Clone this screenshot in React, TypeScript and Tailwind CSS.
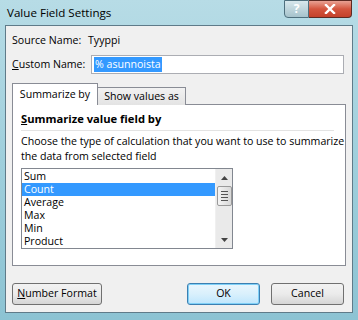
const font = { fontFamily: '"Open Sans", "Noto Sans", sans-serif' }

const items = ["Sum", "Count", "Average", "Max", "Min", "Product"]

const App = () => {
  return (
    <div
      className="w-[358px] h-[320px] overflow-hidden bg-gradient-to-b from-[#b7dce6] via-[#9fcfdc] to-[#8cc3d3] flex flex-col text-[10.6px] text-black whitespace-nowrap"
      style={font}
    >
      {/* title bar */}
      <div className="h-[25px] shrink-0 flex items-start relative">
        <div className="pl-[7px] pt-[4px] text-[11.6px] text-black">Value Field Settings</div>
        <div className="absolute right-[6px] top-0 flex">
          <div className="w-[25px] h-[18px] border border-[#4e6f7d] rounded-bl-[4px] bg-gradient-to-b from-[#d7e7ec] to-[#a6c3cc] flex items-center justify-center text-white text-[12px] font-bold">
            ?
          </div>
          <div className="w-[43px] h-[18px] border border-l-0 border-[#5d2a22] rounded-br-[4px] bg-gradient-to-b from-[#e8a193] via-[#d4553e] to-[#c4412a] flex items-center justify-center">
            <svg width="12" height="10" viewBox="0 0 12 10">
              <path d="M2 1 L10 9 M10 1 L2 9" stroke="#fff" strokeWidth="2.4" strokeLinecap="square" />
            </svg>
          </div>
        </div>
      </div>

      {/* client area */}
      <div className="mx-[5px] h-[288px] shrink-0 border border-[#5f7b89] bg-[#f0f0f0] px-[6px] pt-[7px]">
        <div className="flex items-center h-[16px]">
          <span className="w-[76px]">Source Name:</span>
          <span>Tyyppi</span>
        </div>
        <div className="flex items-center mt-[6px]">
          <span className="w-[79px]">
            <span className="underline">C</span>ustom Name:
          </span>
          <div className="w-[253px] h-[19px] border border-[#abadb3] bg-white flex items-center px-[2px]">
            <span className="bg-[#3399ff] text-white px-[1px] leading-[15px]">% asunnoista</span>
          </div>
        </div>

        {/* tabs */}
        <div className="mt-[9px] flex items-end h-[22px] relative z-10">
          <div className="w-[86px] h-[22px] border border-b-0 border-[#898c95] bg-white flex items-center justify-center">
            Summarize by
          </div>
          <div className="w-[88px] h-[18px] border border-l-0 border-b-0 border-[#898c95] bg-gradient-to-b from-[#f2f2f2] to-[#e3e3e3] flex items-center justify-center">
            Show values as
          </div>
        </div>
        <div className="-mt-[1px] w-[334px] h-[162px] border border-[#898c95] bg-white px-[8px] pt-[6px]">
          <div className="font-bold text-[11.2px] leading-[16px]">
            <span className="underline">S</span>ummarize value field by
          </div>
          <div className="h-px bg-[#e3e3e3] mt-[3px] mr-[3px]" />
          <div className="mt-[3px] leading-[15px]">
            Choose the type of calculation that you want to use to summarize
            <br />
            the data from selected field
          </div>
          <div className="mt-[4px] w-[212px] h-[81px] border border-[#828790] flex">
            <div className="flex-1 pt-[1px]">
              {items.map((it) => (
                <div
                  key={it}
                  className={
                    it === "Count"
                      ? "h-[13px] leading-[13px] pl-[2px] bg-[#3399ff] text-white"
                      : "h-[13px] leading-[13px] pl-[2px]"
                  }
                >
                  {it}
                </div>
              ))}
            </div>
            <div className="w-[17px] bg-[#eaeaea] flex flex-col items-center border-l border-[#f0f0f0]">
              <div className="h-[17px] flex items-center justify-center">
                <svg width="7" height="4" viewBox="0 0 7 4">
                  <path d="M0 4 L3.5 0 L7 4 Z" fill="#444" />
                </svg>
              </div>
              <div className="w-[15px] h-[20px] border border-[#9a9a9a] rounded-[2px] bg-gradient-to-r from-[#f4f4f4] to-[#d8d8d8] flex flex-col items-center justify-center gap-[2px]">
                <div className="w-[7px] h-px bg-[#555]" />
                <div className="w-[7px] h-px bg-[#555]" />
                <div className="w-[7px] h-px bg-[#555]" />
                <div className="w-[7px] h-px bg-[#555]" />
              </div>
              <div className="flex-1" />
              <div className="h-[17px] flex items-center justify-center">
                <svg width="7" height="4" viewBox="0 0 7 4">
                  <path d="M0 0 L3.5 4 L7 0 Z" fill="#444" />
                </svg>
              </div>
            </div>
          </div>
        </div>

        {/* buttons */}
        <div className="mt-[17px] flex items-center">
          <button className="w-[90px] h-[22px] border border-[#707070] rounded-[3px] bg-gradient-to-b from-[#f2f2f2] via-[#ebebeb] to-[#d5d5d5]">
            <span className="underline">N</span>umber Format
          </button>
          <div className="flex-1" />
          <button className="w-[73px] h-[22px] border border-[#3c7fb1] rounded-[3px] bg-gradient-to-b from-[#eaf6fd] via-[#d9f0fc] to-[#bee6fd] shadow-[inset_0_0_0_1px_#7fd0f7]">
            OK
          </button>
          <button className="ml-[11px] mr-[2px] w-[73px] h-[22px] border border-[#707070] rounded-[3px] bg-gradient-to-b from-[#f2f2f2] via-[#ebebeb] to-[#d5d5d5]">
            Cancel
          </button>
        </div>
      </div>
    </div>
  )
}

export default App
